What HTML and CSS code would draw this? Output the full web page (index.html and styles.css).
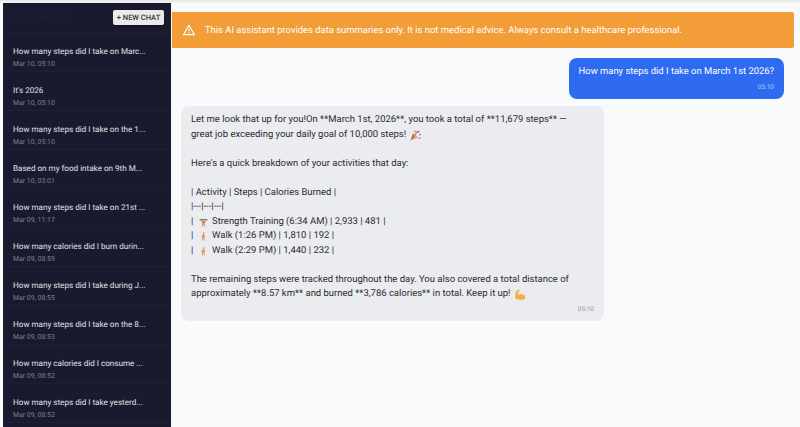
FILE: index.html
```html
<!DOCTYPE html>
<html lang="en">
<head>
    <meta charset="UTF-8">
    <meta name="viewport" content="width=device-width, initial-scale=1.0">
    <title>Chat</title>
    <link rel="stylesheet" href="styles.css">
</head>
<body>

<div class="app">
    <aside class="sidebar">
        <div class="sidebar-head">
            <span class="sidebar-title">Conversations</span>
            <button class="new-chat">+ NEW CHAT</button>
        </div>
        <div class="chat-item"><div class="chat-title">How many steps did I take on Marc...</div><div class="chat-time">Mar 10, 05:10</div></div>
        <div class="chat-item"><div class="chat-title">It's 2026</div><div class="chat-time">Mar 10, 05:10</div></div>
        <div class="chat-item"><div class="chat-title">How many steps did I take on the 1...</div><div class="chat-time">Mar 10, 05:10</div></div>
        <div class="chat-item"><div class="chat-title">Based on my food intake on 9th M...</div><div class="chat-time">Mar 10, 03:01</div></div>
        <div class="chat-item"><div class="chat-title">How many steps did I take on 21st ...</div><div class="chat-time">Mar 09, 11:17</div></div>
        <div class="chat-item"><div class="chat-title">How many calories did I burn durin...</div><div class="chat-time">Mar 09, 08:59</div></div>
        <div class="chat-item"><div class="chat-title">How many steps did I take during J...</div><div class="chat-time">Mar 09, 08:55</div></div>
        <div class="chat-item"><div class="chat-title">How many steps did I take on the 8...</div><div class="chat-time">Mar 09, 08:53</div></div>
        <div class="chat-item"><div class="chat-title">How many calories did I consume ...</div><div class="chat-time">Mar 09, 08:52</div></div>
        <div class="chat-item"><div class="chat-title">How many steps did I take yesterd...</div><div class="chat-time">Mar 09, 08:52</div></div>
    </aside>

    <main class="main">
        <div class="banner">
            <svg class="banner-icon" viewBox="0 0 24 24" width="14" height="14"><path fill="#fff" d="M12 5.99 19.53 19H4.47L12 5.99M12 2 1 21h22L12 2zm1 14h-2v2h2v-2zm0-6h-2v4h2v-4z"/></svg>
            <span>This AI assistant provides data summaries only. It is not medical advice. Always consult a healthcare professional.</span>
        </div>

        <div class="msg-row msg-row-user">
            <div class="bubble bubble-user">
                <div>How many steps did I take on March 1st 2026?</div>
                <div class="msg-time">05:10</div>
            </div>
        </div>

        <div class="msg-row">
            <div class="bubble bubble-bot">
                <p class="msg-par">Let me look that up for you!On **March 1st, 2026**, you took a total of **11,679 steps** —<br>
                great job exceeding your daily goal of 10,000 steps! <svg class="emoji" viewBox="0 0 12 12"><path fill="#e8b23a" d="M.5 11.500 3.500 3l5.500 5.500z"/><path fill="#8a5bc4" d="M3 4.500l2 2L2 10.500 1.300 9.500z"/><path fill="#d96fa8" d="M5 5l1.200 1.200 2-4.700-1-.5z"/><circle cx="9" cy="2" r="1.200" fill="#d9534f"/><circle cx="11" cy="5" r="1" fill="#5b8fd9"/><circle cx="5.500" cy="1.500" r=".9" fill="#5bb56a"/><circle cx="10.500" cy="9" r="1" fill="#d96fa8"/></svg></p>
                <p class="msg-par">Here's a quick breakdown of your activities that day:</p>
                <div class="msg-par">
                    <div>| Activity | Steps | Calories Burned |</div>
                    <div>|---|---|---|</div>
                    <div>| <svg class="emoji" viewBox="-1 -1 14 14"><path stroke="#5d5f66" stroke-width="1.400" d="M1 2.500h10"/><circle cx="6" cy="4.400" r="1.300" fill="#eda25c"/><path fill="#d9632f" d="M3.600 3.200 6 6l2.400-2.800.6.5L7.400 7.400h-2.800L3 3.700z"/><path fill="#e0a060" d="M4.600 7.400h2.800l1.200 3.600H7.200L6 9l-1.200 2H3.400z"/></svg> Strength Training (6:34 AM) | 2,933 | 481 |</div>
                    <div>| <svg class="emoji" viewBox="-1 -1 14 14"><use href="#walker"/></svg> Walk (1:26 PM) | 1,810 | 192 |</div>
                    <div>| <svg class="emoji" viewBox="-1 -1 14 14"><use href="#walker"/></svg> Walk (2:29 PM) | 1,440 | 232 |</div>
                </div>
                <p class="msg-par">The remaining steps were tracked throughout the day. You also covered a total distance of<br>
                approximately **8.57 km** and burned **3,786 calories** in total. Keep it up! <svg class="emoji" viewBox="0 0 12 12"><path fill="#f0b245" d="M.5 11c-.7-2.800-.3-6.500 1.200-9.500l2.800-1 .9 1.600-1.800 1-.4 3.400c1.800-1.500 4-1.400 5.100-.4 1.500-.3 3 .8 3 2.500 0 2.100-2 3.100-5 3.300z"/></svg></p>
                <div class="msg-time">05:10</div>
            </div>
        </div>
    </main>
</div>

<svg class="defs" width="0" height="0"><defs><g id="walker"><circle cx="6.200" cy="1.700" r="1.300" fill="#eda25c"/><path fill="#d98a3d" d="M5 3.300h2.200l.4 3-.7.3.9 4.400H7L5.900 7.300 4.700 11H3.800l1.100-5.300-.9 1-.6-.4z"/></g></defs></svg>

</body>
</html>
```

FILE: styles.css
```css
html, body {
    margin: 0;
    height: 100%;
    overflow: hidden;
}
body {
    font-family: 'Roboto', sans-serif;
    background-color: #f9fafc;
    font-size: 10px;
    text-rendering: geometricPrecision;
}
.app {
    display: flex;
    height: 100%;
    box-sizing: border-box;
    padding: 3px 0 0 3px;
    background-image: linear-gradient(#e6e6e9, #f5f5f7 3px, transparent 3px);
}
.sidebar {
    width: 168px;
    flex-shrink: 0;
    background-color: #1a1a2e;
    overflow: hidden;
}
.sidebar-head {
    display: flex;
    justify-content: space-between;
    align-items: center;
    height: 29px;
    padding: 0 7px 0 8px;
    border-bottom: 1px solid #1f1f35;
}
.sidebar-title {
    color: #1f1f33;
    font-size: 9px;
}
.new-chat {
    width: 51px;
    height: 15px;
    padding: 0;
    border: 0;
    border-radius: 2px;
    background-color: #eaeaea;
    color: #333;
    font-family: 'Roboto', sans-serif;
    font-size: 7.500px;
    font-weight: 500;
    text-rendering: geometricPrecision;
    white-space: nowrap;
    box-shadow: 0 1px 2px rgba(0, 0, 0, .4);
}
.chat-item {
    height: 26px;
    padding: 12px 8px 0 10px;
    border-bottom: 1px solid #1f1f35;
}
.chat-title {
    color: #e3e3e6;
    font-size: 8.100px;
    line-height: 13px;
    white-space: nowrap;
}
.chat-time {
    color: #80808c;
    font-size: 6.900px;
    line-height: 13px;
}
.main {
    flex: 1;
    padding: 9px 6px 0 1px;
    min-width: 0;
}
.banner {
    display: flex;
    align-items: center;
    gap: 9px;
    height: 36px;
    margin-bottom: 10px;
    padding: 0 0 0 10px;
    background-color: #f29d38;
    color: #fff;
    border-radius: 0 2px 2px 0;
    font-size: 9.440px;
}
.banner-icon {
    flex-shrink: 0;
}
.msg-row {
    display: flex;
    margin-bottom: 7.500px;
    padding: 0 10px 0 9px;
}
.msg-row-user {
    justify-content: flex-end;
}
.bubble {
    box-sizing: border-box;
    border-radius: 8px;
    font-size: 9.420px;
}
.bubble-user {
    padding: 7px 10px 6px;
    background-color: #2f6bf0;
    color: #fff;
    line-height: 14.500px;
}
.bubble-user .msg-time {
    color: #b3cbf8;
}
.bubble-bot {
    width: 423px;
    padding: 7px 10px 6px;
    background-color: #ebecef;
    color: #2b2b2f;
    font-size: 9.480px;
    line-height: 14.500px;
}
.msg-par {
    margin: 0 0 14.500px;
}
.msg-par:nth-last-child(2) {
    margin-bottom: 0;
}
.msg-time {
    text-align: right;
    color: #93949a;
    font-size: 6.500px;
    line-height: 11px;
    margin-top: 2px;
}
.emoji {
    width: 11px;
    height: 11px;
    margin: -3px 1px -3px 2px;
    vertical-align: -1px;
}
.defs {
    position: absolute;
}
```
